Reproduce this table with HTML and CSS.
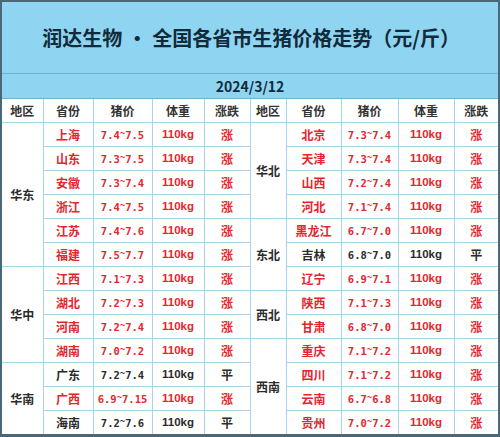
FILE: index.html
```html
<!DOCTYPE html>
<html lang="zh">
<head>
<meta charset="utf-8">
<title>润达生物·全国各省市生猪价格走势</title>
<link rel="stylesheet" href="styles.css">
</head>
<body>
<div class="frame">
<table class="grid">
  <colgroup>
    <col class="c1"><col class="c2"><col class="c3"><col class="c4"><col class="c5">
    <col class="c6"><col class="c7"><col class="c8"><col class="c9"><col class="c10">
  </colgroup>
  <tr class="title-row"><td colspan="10" class="title">润达生物<span class="dot">·</span>全国各省市生猪价格走势（元/斤）</td></tr>
  <tr class="date-row"><td colspan="10" class="date">2024/3/12</td></tr>
  <tr class="head">
    <th>地区</th><th>省份</th><th>猪价</th><th>体重</th><th>涨跌</th>
    <th>地区</th><th>省份</th><th>猪价</th><th>体重</th><th>涨跌</th>
  </tr>
  <tr>
    <td rowspan="6" class="region">华东</td>
    <td class="prov red">上海</td><td class="price red">7.4<span class="tl">~</span>7.5</td><td class="wt red">110kg</td><td class="trend red">涨</td>
    <td rowspan="4" class="region">华北</td>
    <td class="prov red">北京</td><td class="price red">7.3<span class="tl">~</span>7.4</td><td class="wt red">110kg</td><td class="trend red">涨</td>
  </tr>
  <tr>
    <td class="prov red">山东</td><td class="price red">7.3<span class="tl">~</span>7.5</td><td class="wt red">110kg</td><td class="trend red">涨</td>
    <td class="prov red">天津</td><td class="price red">7.3<span class="tl">~</span>7.4</td><td class="wt red">110kg</td><td class="trend red">涨</td>
  </tr>
  <tr>
    <td class="prov red">安徽</td><td class="price red">7.3<span class="tl">~</span>7.4</td><td class="wt red">110kg</td><td class="trend red">涨</td>
    <td class="prov red">山西</td><td class="price red">7.2<span class="tl">~</span>7.4</td><td class="wt red">110kg</td><td class="trend red">涨</td>
  </tr>
  <tr>
    <td class="prov red">浙江</td><td class="price red">7.4<span class="tl">~</span>7.5</td><td class="wt red">110kg</td><td class="trend red">涨</td>
    <td class="prov red">河北</td><td class="price red">7.1<span class="tl">~</span>7.4</td><td class="wt red">110kg</td><td class="trend red">涨</td>
  </tr>
  <tr>
    <td class="prov red">江苏</td><td class="price red">7.4<span class="tl">~</span>7.6</td><td class="wt red">110kg</td><td class="trend red">涨</td>
    <td rowspan="3" class="region">东北</td>
    <td class="prov red">黑龙江</td><td class="price red">6.7<span class="tl">~</span>7.0</td><td class="wt red">110kg</td><td class="trend red">涨</td>
  </tr>
  <tr>
    <td class="prov red">福建</td><td class="price red">7.5<span class="tl">~</span>7.7</td><td class="wt red">110kg</td><td class="trend red">涨</td>
    <td class="prov">吉林</td><td class="price">6.8<span class="tl">~</span>7.0</td><td class="wt">110kg</td><td class="trend">平</td>
  </tr>
  <tr>
    <td rowspan="4" class="region">华中</td>
    <td class="prov red">江西</td><td class="price red">7.1<span class="tl">~</span>7.3</td><td class="wt red">110kg</td><td class="trend red">涨</td>
    <td class="prov red">辽宁</td><td class="price red">6.9<span class="tl">~</span>7.1</td><td class="wt red">110kg</td><td class="trend red">涨</td>
  </tr>
  <tr>
    <td class="prov red">湖北</td><td class="price red">7.2<span class="tl">~</span>7.3</td><td class="wt red">110kg</td><td class="trend red">涨</td>
    <td rowspan="2" class="region">西北</td>
    <td class="prov red">陕西</td><td class="price red">7.1<span class="tl">~</span>7.3</td><td class="wt red">110kg</td><td class="trend red">涨</td>
  </tr>
  <tr>
    <td class="prov red">河南</td><td class="price red">7.2<span class="tl">~</span>7.4</td><td class="wt red">110kg</td><td class="trend red">涨</td>
    <td class="prov red">甘肃</td><td class="price red">6.8<span class="tl">~</span>7.0</td><td class="wt red">110kg</td><td class="trend red">涨</td>
  </tr>
  <tr>
    <td class="prov red">湖南</td><td class="price red">7.0<span class="tl">~</span>7.2</td><td class="wt red">110kg</td><td class="trend red">涨</td>
    <td rowspan="4" class="region">西南</td>
    <td class="prov red">重庆</td><td class="price red">7.1<span class="tl">~</span>7.2</td><td class="wt red">110kg</td><td class="trend red">涨</td>
  </tr>
  <tr>
    <td rowspan="3" class="region">华南</td>
    <td class="prov">广东</td><td class="price">7.2<span class="tl">~</span>7.4</td><td class="wt">110kg</td><td class="trend">平</td>
    <td class="prov red">四川</td><td class="price red">7.1<span class="tl">~</span>7.2</td><td class="wt red">110kg</td><td class="trend red">涨</td>
  </tr>
  <tr>
    <td class="prov red">广西</td><td class="price red">6.9<span class="tl">~</span>7.15</td><td class="wt red">110kg</td><td class="trend red">涨</td>
    <td class="prov red">云南</td><td class="price red">6.7<span class="tl">~</span>6.8</td><td class="wt red">110kg</td><td class="trend red">涨</td>
  </tr>
  <tr>
    <td class="prov">海南</td><td class="price">7.2<span class="tl">~</span>7.6</td><td class="wt">110kg</td><td class="trend">平</td>
    <td class="prov red">贵州</td><td class="price red">7.0<span class="tl">~</span>7.2</td><td class="wt red">110kg</td><td class="trend red">涨</td>
  </tr>
</table>
</div>
</body>
</html>
```

FILE: styles.css
```css
html, body {
  margin: 0;
  padding: 0;
  background: #ffffff;
}

.frame {
  width: 500px;
  height: 437px;
  box-sizing: border-box;
  border: 2px solid #4b6878;
  border-bottom-width: 3px;
  overflow: hidden;
  font-family: "Noto Sans CJK SC", "Noto Sans", sans-serif;
}

.grid {
  width: 100%;
  table-layout: fixed;
  border-collapse: collapse;
}

.c1 { width: 41px; }
.c2 { width: 50px; }
.c3 { width: 59px; }
.c4 { width: 52px; }
.c5 { width: 46px; }
.c6 { width: 36px; }
.c7 { width: 55px; }
.c8 { width: 57px; }
.c9 { width: 56px; }
.c10 { width: 44px; }

.grid td, .grid th {
  border: 1px solid #a9d3e6;
  padding: 0;
  text-align: center;
  vertical-align: middle;
  white-space: nowrap;
  overflow: hidden;
}

.grid tr:first-child td { border-top: none; }
.grid tr td:first-child, .grid tr th:first-child { border-left: none; }
.grid tr td:last-child, .grid tr th:last-child { border-right: none; }

.grid tr { height: 24px; }
.grid tr.title-row { height: 71px; }
.grid tr.date-row { height: 25px; }
.grid tr.head { height: 24px; }

.grid .title {
  background: #8fd5f2;
  color: #112b3b;
  font-size: 20px;
  font-weight: 700;
  padding-left: 2px;
  border-bottom: 1px solid #6fb4d3;
}
.dot {
  padding: 0 5px;
}

.grid .date {
  background: #8fd5f2;
  color: #112b3b;
  font-size: 14px;
  font-weight: 700;
  border-bottom: 1px solid #6fb4d3;
}

.head th {
  font-size: 12px;
  font-weight: 700;
  color: #333333;
}

.region {
  font-size: 12px;
  font-weight: 700;
  color: #2b2b2b;
}

.prov {
  font-size: 12px;
  font-weight: 700;
  color: #2b2b2b;
}

.price {
  font-family: "DejaVu Sans Mono", monospace;
  font-size: 10.5px;
  font-weight: 700;
  color: #2b2b2b;
}

.tl {
  font-size: 9px;
  vertical-align: 3px;
}

.wt {
  font-family: "Liberation Sans", Arial, sans-serif;
  font-size: 11.5px;
  font-weight: 700;
  color: #2b2b2b;
}

.trend {
  font-size: 12px;
  font-weight: 700;
  color: #2b2b2b;
}

.grid .red { color: #e3262e; }
```
